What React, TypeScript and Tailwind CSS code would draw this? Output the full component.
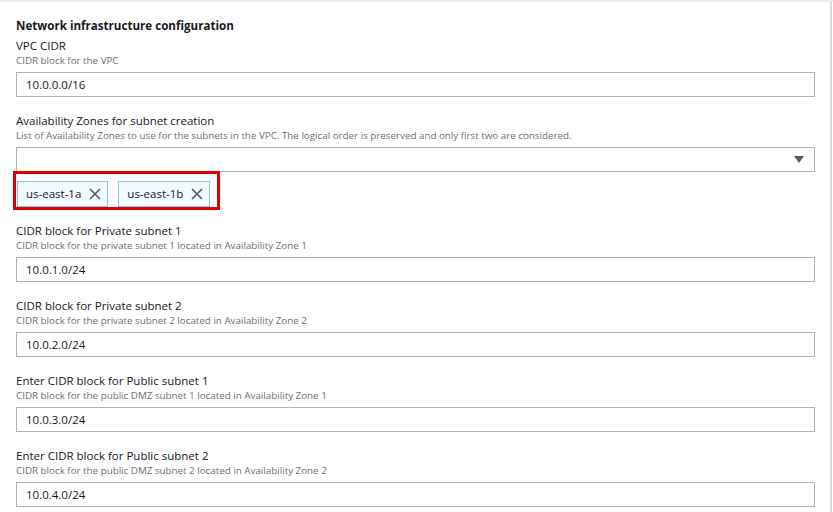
const FIELDS = [
  { label: 'CIDR block for Private subnet 1', desc: 'CIDR block for the private subnet 1 located in Availability Zone 1', value: '10.0.1.0/24' },
  { label: 'CIDR block for Private subnet 2', desc: 'CIDR block for the private subnet 2 located in Availability Zone 2', value: '10.0.2.0/24' },
  { label: 'Enter CIDR block for Public subnet 1', desc: 'CIDR block for the public DMZ subnet 1 located in Availability Zone 1', value: '10.0.3.0/24' },
  { label: 'Enter CIDR block for Public subnet 2', desc: 'CIDR block for the public DMZ subnet 2 located in Availability Zone 2', value: '10.0.4.0/24' },
];

function Field({ label, desc, value }: { label: string; desc: string; value: string }) {
  return (
    <div className="flex flex-col">
      <div className="text-[11.5px] leading-[16px] text-[#16191f]">{label}</div>
      <div className="text-[9.8px] leading-[12px] text-[#687078] mt-[1px]">{desc}</div>
      <div className="mt-[5px] h-[25px] border border-[#aab7b8] flex items-center pl-[9px] text-[11.5px] text-[#16191f]">{value}</div>
    </div>
  );
}

function Tag({ name }: { name: string }) {
  return (
    <div className="h-[26px] flex items-center gap-[8px] pl-[8px] pr-[6px] border border-[#8fc1e0] bg-[#f1faff] text-[11.5px] text-[#16191f]">
      <span>{name}</span>
      <svg width="12" height="12" viewBox="0 0 12 12">
        <path d="M1 1L11 11M11 1L1 11" stroke="#545b64" strokeWidth="1.6" />
      </svg>
    </div>
  );
}

export default function App() {
  return (
    <div className="w-[833px] h-[512px] bg-white overflow-hidden border-t-[2px] border-[#eaeded]" style={{ fontFamily: '"Open Sans", "Noto Sans", sans-serif' }}>
      <div className="w-[832px] h-full border-r-[2px] border-[#d5dbdb] pl-[16px] pr-[15px] pt-[17px]">
        <div className="text-[11.6px] leading-[14px] font-bold text-[#16191f]">Network infrastructure configuration</div>

        <div className="mt-[5px] flex flex-col gap-[16px]">
          <Field label="VPC CIDR" desc="CIDR block for the VPC" value="10.0.0.0/16" />

          <div className="flex flex-col">
            <div className="text-[11.5px] leading-[16px] text-[#16191f]">Availability Zones for subnet creation</div>
            <div className="text-[9.8px] leading-[12px] text-[#687078] mt-[1px]">
              List of Availability Zones to use for the subnets in the VPC. The logical order is preserved and only first two are considered.
            </div>
            <div className="mt-[5px] h-[25px] border border-[#aab7b8] flex items-center justify-end pr-[10px]">
              <svg width="10" height="7" viewBox="0 0 10 7"><path d="M0 0h10L5 7z" fill="#545b64" /></svg>
            </div>
            <div className="relative mt-[9px] flex gap-[10px] pl-[1px]">
              <Tag name="us-east-1a" />
              <Tag name="us-east-1b" />
              <div className="absolute left-[-3px] top-[-10px] w-[207px] h-[39px] border-[3px] border-[#dd0000]" />
            </div>
          </div>

          {FIELDS.map(f => <Field key={f.label} {...f} />)}
        </div>
      </div>
    </div>
  );
}
